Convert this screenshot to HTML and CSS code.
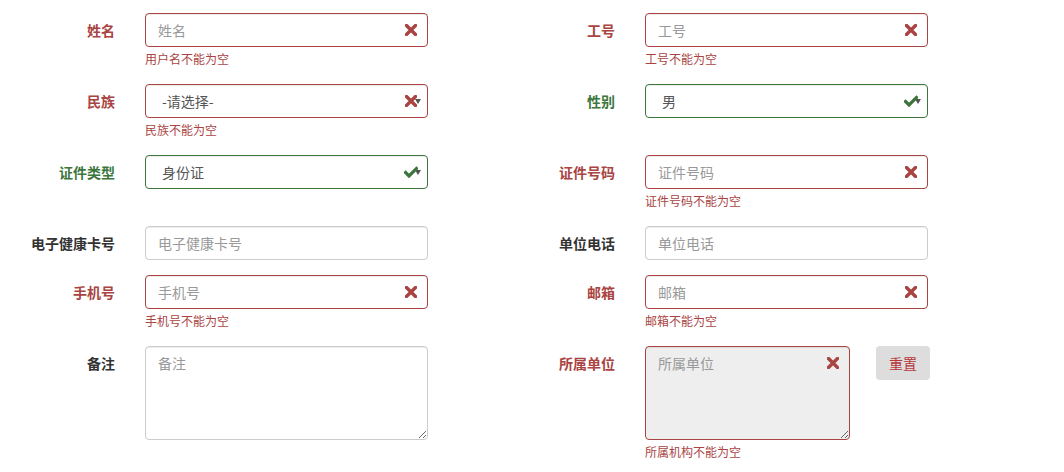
FILE: index.html
```html
<!DOCTYPE html>
<html lang="zh-CN">
<head>
<meta charset="utf-8">
<title>表单</title>
<link rel="stylesheet" href="styles.css">
</head>
<body>
<form class="form">
  <div class="group error">
    <label class="label">姓名</label>
    <div class="field">
      <div class="ctrl-wrap">
        <input class="control" type="text" placeholder="姓名">
        <span class="feedback"><svg viewBox="0 0 12 12" width="12" height="12"><path d="M1.5 1.5 L10.5 10.5 M10.5 1.5 L1.5 10.5" class="x"/></svg></span>
      </div>
      <div class="help">用户名不能为空</div>
    </div>
  </div>
  <div class="group error">
    <label class="label">工号</label>
    <div class="field">
      <div class="ctrl-wrap">
        <input class="control" type="text" placeholder="工号">
        <span class="feedback"><svg viewBox="0 0 12 12" width="12" height="12"><path d="M1.5 1.5 L10.5 10.5 M10.5 1.5 L1.5 10.5" class="x"/></svg></span>
      </div>
      <div class="help">工号不能为空</div>
    </div>
  </div>

  <div class="group error">
    <label class="label">民族</label>
    <div class="field">
      <div class="ctrl-wrap">
        <select class="control select"><option>-请选择-</option></select>
        <span class="caret"></span>
        <span class="feedback"><svg viewBox="0 0 12 12" width="12" height="12"><path d="M1.5 1.5 L10.5 10.5 M10.5 1.5 L1.5 10.5" class="x"/></svg></span>
      </div>
      <div class="help">民族不能为空</div>
    </div>
  </div>
  <div class="group success">
    <label class="label">性别</label>
    <div class="field">
      <div class="ctrl-wrap">
        <select class="control select"><option>男</option></select>
        <span class="caret"></span>
        <span class="feedback"><svg viewBox="0 0 14 12" width="14" height="12"><path d="M1.5 6.5 L5 10 L12.5 2.5" class="ok"/></svg></span>
      </div>
    </div>
  </div>

  <div class="group success">
    <label class="label">证件类型</label>
    <div class="field">
      <div class="ctrl-wrap">
        <select class="control select"><option>身份证</option></select>
        <span class="caret"></span>
        <span class="feedback"><svg viewBox="0 0 14 12" width="14" height="12"><path d="M1.5 6.5 L5 10 L12.5 2.5" class="ok"/></svg></span>
      </div>
    </div>
  </div>
  <div class="group error">
    <label class="label">证件号码</label>
    <div class="field">
      <div class="ctrl-wrap">
        <input class="control" type="text" placeholder="证件号码">
        <span class="feedback"><svg viewBox="0 0 12 12" width="12" height="12"><path d="M1.5 1.5 L10.5 10.5 M10.5 1.5 L1.5 10.5" class="x"/></svg></span>
      </div>
      <div class="help">证件号码不能为空</div>
    </div>
  </div>

  <div class="group">
    <label class="label">电子健康卡号</label>
    <div class="field">
      <div class="ctrl-wrap">
        <input class="control" type="text" placeholder="电子健康卡号">
      </div>
    </div>
  </div>
  <div class="group">
    <label class="label">单位电话</label>
    <div class="field">
      <div class="ctrl-wrap">
        <input class="control" type="text" placeholder="单位电话">
      </div>
    </div>
  </div>

  <div class="group error">
    <label class="label">手机号</label>
    <div class="field">
      <div class="ctrl-wrap">
        <input class="control" type="text" placeholder="手机号">
        <span class="feedback"><svg viewBox="0 0 12 12" width="12" height="12"><path d="M1.5 1.5 L10.5 10.5 M10.5 1.5 L1.5 10.5" class="x"/></svg></span>
      </div>
      <div class="help">手机号不能为空</div>
    </div>
  </div>
  <div class="group error">
    <label class="label">邮箱</label>
    <div class="field">
      <div class="ctrl-wrap">
        <input class="control" type="text" placeholder="邮箱">
        <span class="feedback"><svg viewBox="0 0 12 12" width="12" height="12"><path d="M1.5 1.5 L10.5 10.5 M10.5 1.5 L1.5 10.5" class="x"/></svg></span>
      </div>
      <div class="help">邮箱不能为空</div>
    </div>
  </div>

  <div class="group">
    <label class="label">备注</label>
    <div class="field">
      <div class="ctrl-wrap">
        <textarea class="control area" rows="4" placeholder="备注"></textarea>
      </div>
    </div>
  </div>
  <div class="group error">
    <label class="label">所属单位</label>
    <div class="field">
      <div class="field-row">
        <div class="ctrl-wrap narrow">
          <textarea class="control area readonly" rows="4" placeholder="所属单位" readonly></textarea>
          <span class="feedback"><svg viewBox="0 0 12 12" width="12" height="12"><path d="M1.5 1.5 L10.5 10.5 M10.5 1.5 L1.5 10.5" class="x"/></svg></span>
        </div>
        <button class="btn" type="button">重置</button>
      </div>
      <div class="help">所属机构不能为空</div>
    </div>
  </div>
</form>
</body>
</html>
```

FILE: styles.css
```css
* { box-sizing: border-box; }

html, body {
  margin: 0;
  padding: 0;
  background: #fff;
}

body {
  font-family: "Noto Sans CJK SC", "Liberation Sans", sans-serif;
  font-size: 14px;
  line-height: 20px;
  color: #333;
  padding-top: 13px;
}

.form {
  display: grid;
  grid-template-columns: 500px 500px;
  row-gap: 15px;
  align-items: start;
}

.group {
  display: flex;
  align-items: flex-start;
}

.label {
  width: 115px;
  flex: none;
  text-align: right;
  font-weight: bold;
  padding-top: 7px;
  line-height: 20px;
  color: #333;
  white-space: nowrap;
}

.field {
  margin-left: 30px;
  width: 283px;
  flex: none;
}

.field-row {
  display: flex;
  align-items: flex-start;
  gap: 26px;
  width: 340px;
}

.ctrl-wrap {
  position: relative;
  width: 283px;
}

.ctrl-wrap.narrow {
  width: 205px;
}

.control {
  display: block;
  width: 100%;
  height: 34px;
  margin: 0;
  padding: 6px 12px;
  font-family: inherit;
  font-size: 14px;
  line-height: 20px;
  color: #555;
  background: #fff;
  border: 1px solid #ccc;
  border-radius: 4px;
  box-shadow: inset 0 1px 1px rgba(0, 0, 0, 0.075);
  outline: none;
}

.control::placeholder {
  color: #999;
  opacity: 1;
}

.select {
  -webkit-appearance: none;
  appearance: none;
  padding-left: 16px;
  padding-right: 30px;
}

.area {
  height: 94px;
  resize: vertical;
}

.readonly {
  background: #eee;
}

.caret {
  position: absolute;
  right: 7px;
  top: 15px;
  width: 0;
  height: 0;
  border-left: 3px solid transparent;
  border-right: 3px solid transparent;
  border-top: 5px solid #555;
}

.feedback {
  position: absolute;
  top: 0;
  right: 0;
  width: 34px;
  height: 34px;
  display: flex;
  align-items: center;
  justify-content: center;
  pointer-events: none;
}

.feedback svg {
  display: block;
}

.x {
  fill: none;
  stroke: #a94442;
  stroke-width: 3.4;
  stroke-linecap: square;
}

.ok {
  fill: none;
  stroke: #3c763d;
  stroke-width: 3.2;
  stroke-linecap: square;
}

.help {
  font-size: 12px;
  line-height: 18px;
  padding-top: 3px;
  height: 22px;
  color: #a94442;
  white-space: nowrap;
}

.error .label { color: #a94442; }
.error .control { border-color: #a94442; }

.success .label { color: #3c763d; }
.success .control { border-color: #3c763d; }

.btn {
  flex: none;
  width: 54px;
  height: 34px;
  padding: 0;
  border: none;
  border-radius: 4px;
  background: #ddd;
  color: #b8373a;
  font-family: inherit;
  font-size: 14px;
  line-height: 20px;
}
```
